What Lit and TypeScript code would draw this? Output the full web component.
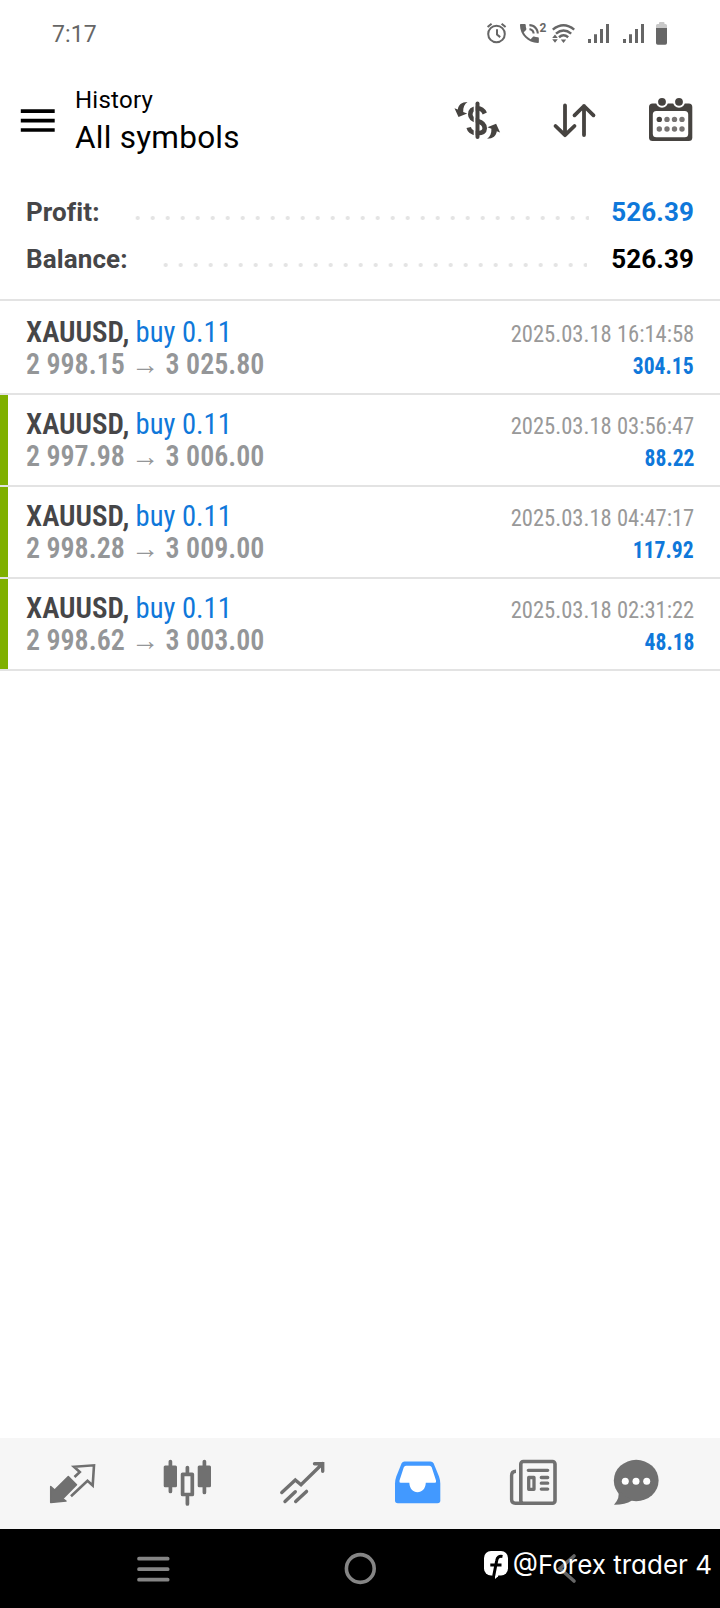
import { LitElement, html, svg, css } from "lit";
import { customElement, property } from "lit/decorators.js";

interface Deal {
  symbol: string;
  side: string;
  open: string;
  close: string;
  time: string;
  profit: string;
  marked: boolean;
}

const deals: Deal[] = [
  { symbol: "XAUUSD", side: "buy 0.11", open: "2 998.15", close: "3 025.80", time: "2025.03.18 16:14:58", profit: "304.15", marked: false },
  { symbol: "XAUUSD", side: "buy 0.11", open: "2 997.98", close: "3 006.00", time: "2025.03.18 03:56:47", profit: "88.22", marked: true },
  { symbol: "XAUUSD", side: "buy 0.11", open: "2 998.28", close: "3 009.00", time: "2025.03.18 04:47:17", profit: "117.92", marked: true },
  { symbol: "XAUUSD", side: "buy 0.11", open: "2 998.62", close: "3 003.00", time: "2025.03.18 02:31:22", profit: "48.18", marked: true },
];

const icon = (x: number, y: number, w: number, h: number, body: unknown) =>
  html`<svg width=${w} height=${h} viewBox="${x} ${y} ${w} ${h}" fill="none">${body}</svg>`;

@customElement("status-bar")
class StatusBar extends LitElement {
  static styles = css`
    :host { display: flex; justify-content: space-between; height: 68px; padding: 0 50px 0 52px; box-sizing: border-box; color: #666; }
    svg { display: block; }
    .time { font-size: 23px; line-height: 70px; letter-spacing: 0.15px; }
    .sup { font: 700 12px Roboto, sans-serif; }
  `;
  render() {
    const bars = (x: number) => svg`<path fill="#666" d="M${x} 39h3v4h-3zM${x + 6} 34.3h3v8.7h-3zM${x + 12} 29h3v14h-3zM${x + 18} 24h3v19h-3z"/>`;
    return html`
      <span class="time">7:17</span>
      ${icon(480, 0, 190, 68, svg`
        <circle cx="496.5" cy="34" r="8.3" stroke="#666" stroke-width="2"/>
        <path d="M497 29.3v5.2l3.2 2.6M487.6 27l4-3.3M501.6 23.7l4 3.3" stroke="#666" stroke-width="2"/>
        <path transform="translate(516.8 20.9) scale(1.05)" fill="#666" d="M20 15.5c-1.25 0-2.45-.2-3.57-.57-.35-.11-.74-.03-1.02.24l-2.2 2.2c-2.83-1.44-5.15-3.75-6.59-6.59l2.2-2.21c.28-.26.36-.65.25-1C8.7 6.45 8.5 5.25 8.5 4c0-.55-.45-1-1-1H4c-.55 0-1 .45-1 1 0 9.39 7.61 17 17 17 .55 0 1-.45 1-1v-3.5c0-.55-.45-1-1-1zM19 12h2c0-4.97-4.03-9-9-9v2c3.87 0 7 3.13 7 7zm-4 0h2c0-2.76-2.24-5-5-5v2c1.66 0 3 1.34 3 3z"/>
        <text class="sup" x="539.6" y="32" fill="#666">2</text>
        <path d="M552.8 29.600Q563.500 21 574.200 29.600M556 33.600Q563.500 27.400 571.200 33.600M559 37.200Q563.500 33.400 568.200 37.200" stroke="#666" stroke-width="2.500"/>
        <path fill="#666" d="M560.8 39.5h5.4l-2.7 3.4zM555 34.6l2.8 3.5h-5.6zM552.2 39.2h5.6l-2.8 3.6z"/>
        ${bars(588)}${bars(623)}
        <path fill="#c8c8c8" d="M659 24v-1q0-1 1-1h3.500q1 0 1 1v1h1q1.500 0 1.500 1.500V29h-11v-3.500q0-1.500 1.500-1.500z"/>
        <path fill="#666" d="M656 28h11v15q0 1.700-1.700 1.700h-7.600q-1.700 0-1.700-1.700z"/>
      `)}
    `;
  }
}

@customElement("top-bar")
class TopBar extends LitElement {
  static styles = css`
    :host { display: flex; height: 112px; color: #000; }
    svg { display: block; }
    .titles { flex: 1; padding-top: 16px; }
    .section { font-size: 24px; line-height: 32px; letter-spacing: 0.25px; }
    .title { font-size: 31.5px; line-height: 44px; letter-spacing: 0.25px; }
  `;
  render() {
    const ink = "#464340";
    const arrow = "M467.5 102C461.500 102 458.300 105 457.800 109.500L454.500 108.300L458.500 117L467.200 113.500L463.200 112C463 107.500 464.500 104 467.500 102Z";
    return html`
      ${icon(0, 68, 75, 112, svg`<path d="M20.800 111.200H54.700M20.800 120.600H54.700M20.800 130H54.700" stroke="#000" stroke-width="3.700"/>`)}
      <div class="titles">
        <div class="section">History</div>
        <div class="title">All symbols</div>
      </div>
      ${icon(430, 68, 95, 112, svg`
        <path d="M484.800 113.500Q482.500 108.300 477.500 108.300Q470.300 108.500 470.300 114.500Q470.300 119 477.500 121Q484.700 123 484.700 128.300Q484.500 133 477.500 133.300Q470 133 468.700 127.500" stroke=${ink} stroke-width="4.600"/>
        <path d="M474.700 101v39" stroke="#fff" stroke-width="2"/>
        <path d="M477.500 103.500v33.500" stroke=${ink} stroke-width="4" stroke-linecap="round"/>
        <path d=${arrow} fill=${ink}/>
        <path d=${arrow} fill=${ink} transform="rotate(180 477.300 120.400)"/>
      `)}
      ${icon(525, 68, 98, 112, svg`
        <path d="M565 105.500V135M555.500 126L565 135.200L574.500 126M584 135V106M574.500 115.300L584 106L593.500 115.300" stroke=${ink} stroke-width="3.800" stroke-linecap="round" stroke-linejoin="round"/>
      `)}
      ${icon(623, 68, 97, 112, svg`
        <rect x="649" y="103.500" width="43.300" height="37.500" rx="3.500" fill=${ink}/>
        <rect x="652.800" y="111" width="35.400" height="26.300" rx="3.500" fill="#fff"/>
        ${[662, 679].map((x) => svg`<circle cx=${x} cy="101.800" r="6" fill="#fff"/><circle cx=${x} cy="101.800" r="3.900" fill=${ink}/>`)}
        ${[119.4, 129].map((y, r) => [659.3, 667, 674.5, 682].map((x, c) => svg`<circle cx=${x} cy=${y} r="2.700" fill=${r + c === 0 ? "#464340" : "#777473"}/>`))}
      `)}
    `;
  }
}

@customElement("deal-row")
class DealRow extends LitElement {
  @property({ attribute: false }) deal!: Deal;
  static styles = css`
    :host { display: flex; height: 92px; border-bottom: 2px solid #e3e3e3; box-sizing: border-box; font-stretch: 75%; }
    .mark { width: 7.5px; }
    .on { background: #7fb000; }
    .body { flex: 1; padding: 13px 26px 0 18.5px; }
    .line { display: flex; justify-content: space-between; align-items: baseline; height: 32px; line-height: 32px; font-size: 29px; white-space: pre; }
    .symbol { font-weight: 600; color: #464648; }
    .side { display: inline-block; color: #0f78da; transform: scaleX(0.985); transform-origin: left; }
    .price { font-weight: 600; color: #949698; transform: scaleX(0.964); transform-origin: left; }
    .time { font-size: 24px; color: #999; transform: scaleX(0.94); transform-origin: right; }
    .profit { font-size: 24px; font-weight: 700; color: #0f78da; transform: scaleX(0.9); transform-origin: right; }
  `;
  render() {
    const d = this.deal;
    return html`
      <div class="mark ${d.marked ? "on" : ""}"></div>
      <div class="body">
        <div class="line">
          <span><span class="symbol">${d.symbol},</span><span class="side"> ${d.side}</span></span>
          <span class="time">${d.time}</span>
        </div>
        <div class="line">
          <span class="price">${d.open} → ${d.close}</span>
          <span class="profit">${d.profit}</span>
        </div>
      </div>
    `;
  }
}

@customElement("tab-bar")
class TabBar extends LitElement {
  static styles = css`
    :host { display: flex; height: 91.5px; padding-left: 15px; background: #f6f6f6; }
    svg { display: block; }
  `;
  render() {
    const c = "#707070";
    return html`
      ${icon(15, 1437.5, 115, 91.5, svg`
        <path d="M50.700 1486L54.700 1489.500L68.300 1476L76.500 1484.300L62.700 1498.200L66 1500.500L50.700 1502Z" fill=${c} stroke=${c} stroke-width="1.500" stroke-linejoin="round"/>
        <path d="M71 1495.700L87.500 1480.300L92.700 1485L94 1464.800L74 1466.300L79.800 1471.500L74.500 1476.500" stroke=${c} stroke-width="2.600"/>
      `)}
      ${icon(130, 1437.5, 115, 91.5, svg`
        <path d="M170.400 1461v30M204.400 1461v31M187.400 1467v5M187.400 1496v7.500" stroke=${c} stroke-width="3.700" stroke-linecap="round"/>
        <rect x="163.700" y="1465" width="13.300" height="21.800" rx="1.500" fill=${c}/>
        <rect x="197.700" y="1465" width="13.300" height="21.800" rx="1.500" fill=${c}/>
        <rect x="182.600" y="1473.800" width="9.700" height="20.200" stroke=${c} stroke-width="3.700" stroke-linejoin="round"/>
      `)}
      ${icon(245, 1437.5, 115, 91.5, svg`
        <path d="M281.800 1492L295.300 1479.500L301 1484.300L322.700 1463M314.500 1463.200H322.700V1470.800M285 1501L295.300 1491.200M295.700 1501L306.500 1490.900" stroke=${c} stroke-width="3.400" stroke-linecap="round"/>
      `)}
      ${icon(360, 1437.5, 115, 91.5, svg`
        <path d="M404.500 1461H430.500Q432.700 1461 433.700 1463L439 1476Q440.300 1479.500 440.300 1483V1500Q440.300 1502.700 437.500 1502.700H397.800Q395 1502.700 395 1500V1483Q395 1479.500 396.300 1476L401.500 1463Q402.500 1461 404.500 1461Z" fill="#4299ff"/>
        <path d="M406 1465.300H429.500Q431 1465.300 431.700 1466.800L436 1480Q436.500 1482.300 435 1482.300H425.800C425.500 1488.500 422 1491.700 417.500 1491.700S409.700 1488.500 409.300 1482.300H400.500Q399 1482.300 399.500 1480L403.800 1466.800Q404.500 1465.300 406 1465.300Z" fill="#fff"/>
      `)}
      ${icon(475, 1437.5, 115, 91.5, svg`
        <rect x="520.800" y="1461" width="34.200" height="41.700" rx="2.500" stroke=${c} stroke-width="3.600"/>
        <path d="M516 1470.700Q511.600 1470.700 511.600 1475V1499Q511.600 1502.700 515.300 1502.700H523" stroke=${c} stroke-width="3.400"/>
        <path d="M528.300 1469.800H547.700M541.300 1477H547.700M541.300 1482.700H547.700M541.300 1488.600H547.700" stroke=${c} stroke-width="3.300" stroke-linecap="round"/>
        <rect x="528.700" y="1477" width="5.300" height="11.800" stroke=${c} stroke-width="3.300" stroke-linejoin="round"/>
      `)}
      ${icon(590, 1437.5, 115, 91.5, svg`
        <ellipse cx="636.200" cy="1480" rx="22.400" ry="20.700" fill=${c}/>
        <path d="M618 1490Q620.500 1497 614 1504.300Q624.500 1504.500 632 1500Z" fill=${c}/>
        ${[625.3, 636, 646.7].map((x) => svg`<circle cx=${x} cy="1480.700" r="3.500" fill="#fff"/>`)}
      `)}
    `;
  }
}

@customElement("system-nav")
class SystemNav extends LitElement {
  static styles = css`
    :host { display: block; position: relative; height: 79px; background: #000; }
    svg { display: block; }
    .credit { position: absolute; right: 8px; top: 19.5px; display: flex; align-items: center; color: #fff; font: 380 26px/32px Inter, sans-serif; font-feature-settings: "cv11"; gap: 4px; white-space: pre; }
  `;
  render() {
    return html`
      ${icon(0, 1529, 720, 79, svg`
        <path d="M139 1558.700H167.700M139 1569.200H167.700M139 1579.700H167.700" stroke="#858585" stroke-width="3.700" stroke-linecap="round"/>
        <circle cx="360.300" cy="1568.500" r="13.900" stroke="#858585" stroke-width="3.600"/>
        <path d="M574 1556L560 1568.500L574 1581" stroke="#666" stroke-width="3.600" stroke-linecap="round"/>
      `)}
      <div class="credit">
        ${icon(486, 1551, 26, 30, svg`
          <rect x="487" y="1552" width="24" height="24.600" rx="7" fill="#fff"/>
          <path d="M498 1576L502 1573L501 1577.500L498 1580Z" fill="#fff"/>
          <path d="M505.500 1557.500Q500.500 1556.500 499.700 1561.500L496.700 1577M493.300 1566H504.500" stroke="#000" stroke-width="3"/>
        `)}
        <span>@Forex trader 4</span>
      </div>
    `;
  }
}

@customElement("app-root")
class AppRoot extends LitElement {
  static styles = css`
    :host { display: flex; flex-direction: column; height: 1608px; background: #fff; font-family: Roboto, "Liberation Sans", sans-serif; overflow: hidden; }
    .summary { padding: 9px 26px 0; height: 121px; box-sizing: border-box; border-bottom: 2px solid #e3e3e3; }
    .entry { display: flex; height: 47px; line-height: 47px; font-size: 26px; font-weight: 700; color: #464648; letter-spacing: 0.1px; }
    .dots { flex: 1; height: 4px; margin: 26.5px 22px 0 0; background: radial-gradient(circle at 13px 2px, #e4e4e4 1.8px, transparent 2.3px) right top / 15px 4px repeat-x; }
    .profit-dots { margin-left: 35px; }
    .balance-dots { margin-left: 35px; margin-right: 24px; }
    .sum { color: #000; }
    .blue { color: #0f78da; }
    .list { flex: 1; padding-top: 2px; }
  `;
  render() {
    return html`
      <status-bar></status-bar>
      <top-bar></top-bar>
      <section class="summary">
        <div class="entry"><span>Profit:</span><span class="dots profit-dots"></span><span class="sum blue">526.39</span></div>
        <div class="entry"><span>Balance:</span><span class="dots balance-dots"></span><span class="sum">526.39</span></div>
      </section>
      <section class="list">${deals.map((d) => html`<deal-row .deal=${d}></deal-row>`)}</section>
      <tab-bar></tab-bar>
      <system-nav></system-nav>
    `;
  }
}
